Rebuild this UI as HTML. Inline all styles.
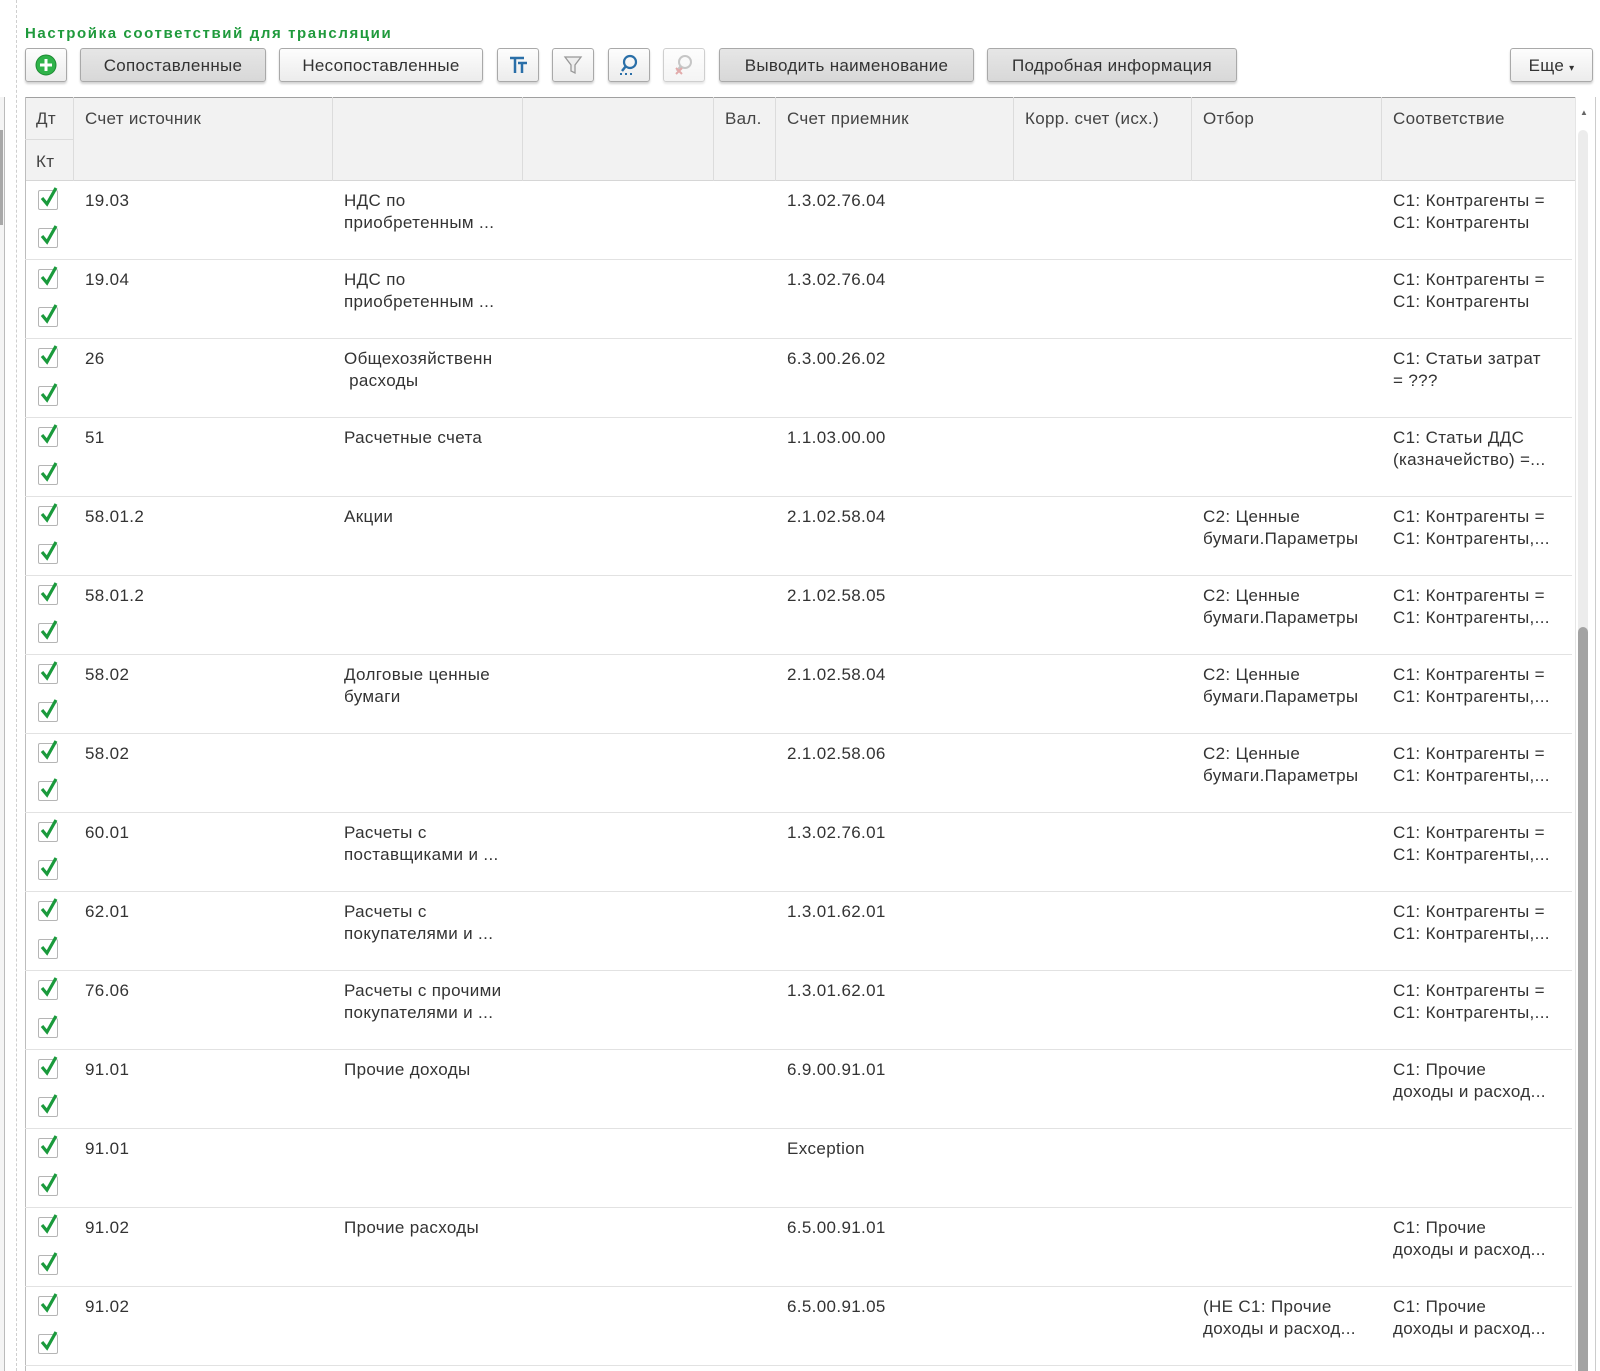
<!DOCTYPE html>
<html><head><meta charset="utf-8"><style>
body{margin:0;width:1600px;height:1371px;overflow:hidden;background:#fff;font-family:"Liberation Sans",Arial,sans-serif;color:#333;position:relative}
.a{position:absolute}
.title{left:25px;top:25px;font-size:15px;color:#1f9a3c;font-weight:bold;letter-spacing:1.6px}
.btn{position:absolute;top:48px;height:34px;box-sizing:border-box;border:1px solid #a9a9a9;border-radius:3px;background:linear-gradient(#fdfdfd,#ececec);box-shadow:0 2px 2px rgba(0,0,0,.18);font-size:17px;color:#333;text-align:center;line-height:33px;letter-spacing:0.3px}
.btn.on{background:linear-gradient(#e6e6e6,#d8d8d8)}
.hd{position:absolute;top:97px;height:84px;background:#f2f2f2;border-top:1px solid #a0a0a0;border-bottom:1px solid #d6d6d6;box-sizing:border-box}
.hc{position:absolute;top:97px;height:84px;border-left:1px solid #dcdcdc;box-sizing:border-box;font-size:17px;padding:12px 0 0 11px;color:#444;letter-spacing:0.3px}
.row{position:absolute;left:25px;width:1547px;height:79px;border-bottom:1px solid #e2e2e2;box-sizing:border-box}
.t{position:absolute;font-size:17px;line-height:22px;color:#333;white-space:nowrap;letter-spacing:0.35px}
.cb{position:absolute;left:13px;width:20px;height:20px;border:1px solid #b5b5b5;border-radius:2px;background:#fff;box-sizing:border-box}
.cb svg{position:absolute;left:1px;top:-5px}
</style></head><body>
<div class="a" style="left:16px;top:0;height:1371px;border-left:1px dashed #cfcfcf"></div>
<div class="a" style="left:0;top:97px;width:4px;height:1274px;border-right:1px solid #bbb;background:#f4f4f4"></div>
<div class="a" style="left:0;top:130px;width:3px;height:95px;background:#a8a8a8"></div>
<div class="a title">Настройка соответствий для трансляции</div>

<div class="btn" style="left:25px;width:42px"><svg width="24" height="24" viewBox="0 0 24 24" style="margin-top:4px"><circle cx="12" cy="12" r="10" fill="#2fb34a" stroke="#1d8a33"/><path d="M12 6v12M6 12h12" stroke="#fff" stroke-width="3"/></svg></div>
<div class="btn on" style="left:80px;width:186px">Сопоставленные</div>
<div class="btn" style="left:279px;width:204px">Несопоставленные</div>
<div class="btn" style="left:497px;width:42px"><svg width="22" height="22" viewBox="0 0 22 22" style="margin-top:5px"><path d="M3 4h14M8 4v15M11 9h9M15 9v10" stroke="#2a6fa8" stroke-width="2.5" fill="none"/></svg></div>
<div class="btn" style="left:552px;width:42px"><svg width="22" height="22" viewBox="0 0 22 22" style="margin-top:5px"><path d="M3 3h16l-6 8v8l-4-2v-6z" fill="#eee" stroke="#999" stroke-width="1.3"/></svg></div>
<div class="btn" style="left:608px;width:42px"><svg width="24" height="24" viewBox="0 0 24 24" style="margin-top:4px"><circle cx="13" cy="9" r="6" fill="none" stroke="#2a6fa8" stroke-width="2.2"/><path d="M9 13l-4 5" stroke="#2a6fa8" stroke-width="2.5"/><path d="M3 21h2M8 21h2M13 21h2" stroke="#2a6fa8" stroke-width="2"/></svg></div>
<div class="btn" style="left:663px;width:42px;opacity:.55"><svg width="24" height="24" viewBox="0 0 24 24" style="margin-top:4px"><circle cx="13" cy="9" r="6" fill="none" stroke="#999" stroke-width="2"/><path d="M9 13l-4 5" stroke="#999" stroke-width="2.5"/><path d="M4 15l6 6M10 15l-6 6" stroke="#c66" stroke-width="2"/></svg></div>
<div class="btn on" style="left:719px;width:255px">Выводить наименование</div>
<div class="btn on" style="left:987px;width:250px">Подробная информация</div>
<div class="btn" style="left:1510px;width:83px">Еще <span style="font-size:10px">▾</span></div>

<div class="hd" style="left:25px;width:1550px"></div>
<div class="a" style="left:1575px;top:97px;width:18px;height:1274px;background:#fff;border-left:1px solid #e5e5e5"></div>
<div class="a" style="left:1580px;top:108px;font-size:8px;color:#666">▲</div>
<div class="a" style="left:1578px;top:130px;width:10px;height:1241px;background:#ececec;border-radius:5px 5px 0 0"></div>
<div class="a" style="left:1578px;top:627px;width:10px;height:744px;background:#a3a3a3;border-radius:5px 5px 0 0"></div>
<div class="a" style="left:1595px;top:97px;height:1274px;border-left:1px solid #ccc"></div>
<div class="a" style="left:25px;top:97px;height:1274px;border-left:1px solid #bdbdbd"></div>

<div class="hc" style="left:25px;width:48px;border-left:none;height:42px">Дт</div>
<div class="hc" style="left:25px;width:48px;border-left:none;top:139px;height:42px;border-top:1px solid #dcdcdc">Кт</div>
<div class="hc" style="left:73px;width:260px">Счет источник</div>
<div class="hc" style="left:332px;width:190px"></div>
<div class="hc" style="left:522px;width:191px"></div>
<div class="hc" style="left:713px;width:62px">Вал.</div>
<div class="hc" style="left:775px;width:238px">Счет приемник</div>
<div class="hc" style="left:1013px;width:178px">Корр. счет (исх.)</div>
<div class="hc" style="left:1191px;width:190px">Отбор</div>
<div class="hc" style="left:1381px;width:194px">Соответствие</div>

<div id="rows"></div>
<script>
var d=[["19.03","НДС по|приобретенным ...","1.3.02.76.04","","C1: Контрагенты =|C1: Контрагенты"],
["19.04","НДС по|приобретенным ...","1.3.02.76.04","","C1: Контрагенты =|C1: Контрагенты"],
["26","Общехозяйственн|&nbsp;расходы","6.3.00.26.02","","C1: Статьи затрат|= ???"],
["51","Расчетные счета","1.1.03.00.00","","C1: Статьи ДДС|(казначейство) =..."],
["58.01.2","Акции","2.1.02.58.04","C2: Ценные|бумаги.Параметры","C1: Контрагенты =|C1: Контрагенты,..."],
["58.01.2","","2.1.02.58.05","C2: Ценные|бумаги.Параметры","C1: Контрагенты =|C1: Контрагенты,..."],
["58.02","Долговые ценные|бумаги","2.1.02.58.04","C2: Ценные|бумаги.Параметры","C1: Контрагенты =|C1: Контрагенты,..."],
["58.02","","2.1.02.58.06","C2: Ценные|бумаги.Параметры","C1: Контрагенты =|C1: Контрагенты,..."],
["60.01","Расчеты с|поставщиками и ...","1.3.02.76.01","","C1: Контрагенты =|C1: Контрагенты,..."],
["62.01","Расчеты с|покупателями и ...","1.3.01.62.01","","C1: Контрагенты =|C1: Контрагенты,..."],
["76.06","Расчеты с прочими|покупателями и ...","1.3.01.62.01","","C1: Контрагенты =|C1: Контрагенты,..."],
["91.01","Прочие доходы","6.9.00.91.01","","C1: Прочие|доходы и расход..."],
["91.01","","Exception","",""],
["91.02","Прочие расходы","6.5.00.91.01","","C1: Прочие|доходы и расход..."],
["91.02","","6.5.00.91.05","(НЕ C1: Прочие|доходы и расход...","C1: Прочие|доходы и расход..."]];
var ck='<svg width="18" height="22" viewBox="0 0 18 22"><path d="M2 12l5 6L16 2" stroke="#1a9a3c" stroke-width="3.2" fill="none"/></svg>';
var h='';
d.forEach(function(r,i){var top=181+i*79;
h+='<div class="row" style="top:'+top+'px"><div class="cb" style="top:9px">'+ck+'</div><div class="cb" style="top:47px">'+ck+'</div>'+
'<div class="t" style="left:60px;top:9px">'+r[0]+'</div>'+
'<div class="t" style="left:319px;top:9px">'+r[1].replace('|','<br>')+'</div>'+
'<div class="t" style="left:762px;top:9px">'+r[2]+'</div>'+
'<div class="t" style="left:1178px;top:9px">'+r[3].replace('|','<br>')+'</div>'+
'<div class="t" style="left:1368px;top:9px">'+r[4].replace('|','<br>')+'</div></div>';});
document.getElementById('rows').innerHTML=h;
</script>
</body></html>
